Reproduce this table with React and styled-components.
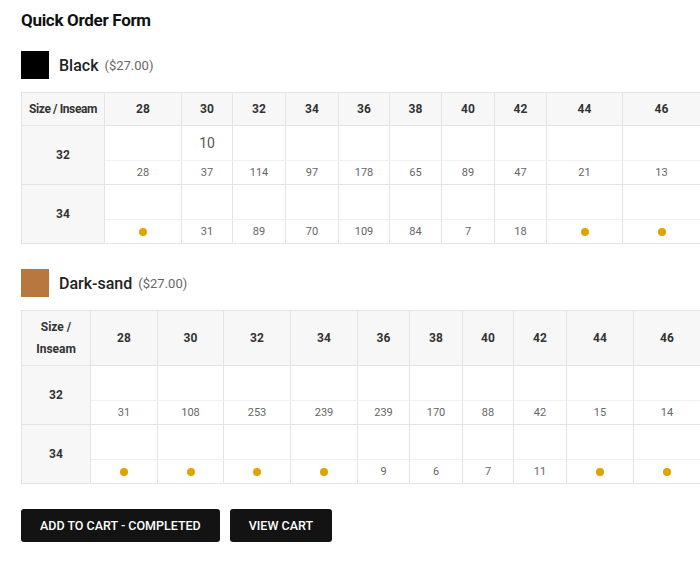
import React from 'react'
import styled, { createGlobalStyle } from 'styled-components'

const GlobalStyle = createGlobalStyle`
    html, body {
        margin: 0;
        padding: 0;
        background: #fff;
        overflow: hidden;
    }
    body {
        font-family: Roboto, "Liberation Sans", sans-serif;
        color: #222;
    }
`

const SIZES = ['28', '30', '32', '34', '36', '38', '40', '42', '44', '46']

const PRODUCTS = [
    {
        name: 'Black',
        price: '($27.00)',
        swatch: '#000',
        singleLine: true,
        widths: [83, 77, 51, 53, 53, 51, 52, 53, 52, 76, 78],
        rows: [
            { inseam: '32', values: { '30': '10' }, stock: [28, 37, 114, 97, 178, 65, 89, 47, 21, 13] },
            { inseam: '34', values: {}, stock: [null, 31, 89, 70, 109, 84, 7, 18, null, null] },
        ],
    },
    {
        name: 'Dark-sand',
        price: '($27.00)',
        swatch: '#b8773f',
        singleLine: false,
        widths: [69, 67, 66, 67, 67, 52, 53, 51, 53, 67, 67],
        rows: [
            { inseam: '32', values: {}, stock: [31, 108, 253, 239, 239, 170, 88, 42, 15, 14] },
            { inseam: '34', values: {}, stock: [null, null, null, null, 9, 6, 7, 11, null, null] },
        ],
    },
]

export default function App() {
    return (
        <Page>
            <GlobalStyle />
            <Title>Quick Order Form</Title>
            {
                PRODUCTS.map((product) => (
                    <Product key={product.name}>
                        <ProductHead>
                            <Swatch $color={product.swatch} />
                            <ProductName>{product.name}</ProductName>
                            <Price>{product.price}</Price>
                        </ProductHead>
                        <Grid>
                            <colgroup>
                                {product.widths.map((w, i) => <Col key={i} $w={w} />)}
                            </colgroup>
                            <thead>
                                <tr>
                                    <HeadCell $nowrap={product.singleLine}>Size / Inseam</HeadCell>
                                    {SIZES.map((s) => <HeadCell key={s}>{s}</HeadCell>)}
                                </tr>
                            </thead>
                            <tbody>
                                {
                                    product.rows.map((row) => (
                                        <React.Fragment key={row.inseam}>
                                            <tr>
                                                <RowLabel rowSpan={2}>{row.inseam}</RowLabel>
                                                {SIZES.map((s) => (
                                                    <InputCell key={s}>
                                                        <QtyInput defaultValue={row.values[s] || ''} />
                                                    </InputCell>
                                                ))}
                                            </tr>
                                            <tr>
                                                {row.stock.map((n, i) => (
                                                    <StockCell key={i}>
                                                        {n === null ? <Dot /> : n}
                                                    </StockCell>
                                                ))}
                                            </tr>
                                        </React.Fragment>
                                    ))
                                }
                            </tbody>
                        </Grid>
                    </Product>
                ))
            }
            <Actions>
                <Button>Add to cart - completed</Button>
                <Button>View cart</Button>
            </Actions>
        </Page>
    )
}

const Page = styled.div`
    padding: 8px 0 0 21px;
    width: 679px;
`
const Title = styled.h1`
    margin: 0 0 19px;
    font-size: 17px;
    line-height: 24px;
    font-weight: 700;
    color: #111;
    letter-spacing: -0.3px;
`
const Product = styled.section`
    margin-bottom: 25px;
`
const ProductHead = styled.div`
    display: flex;
    align-items: center;
    margin-bottom: 13px;
`
const Swatch = styled.span`
    width: 28px;
    height: 28px;
    background: ${(p) => p.$color};
    margin-right: 10px;
`
const ProductName = styled.span`
    font-size: 16px;
    font-weight: 500;
    color: #222;
    margin-right: 6px;
`
const Price = styled.span`
    font-size: 13px;
    color: #666;
`
const Grid = styled.table`
    width: 679px;
    table-layout: fixed;
    border-collapse: collapse;
    font-size: 12px;
`
const Col = styled.col`
    width: ${(p) => p.$w}px;
`
const HeadCell = styled.th`
    background: #f7f7f7;
    border: 1px solid #e4e4e4;
    padding: 5px 3px;
    height: 22px;
    line-height: 22px;
    font-weight: 700;
    color: #333;
    text-align: center;
    white-space: ${(p) => (p.$nowrap ? 'nowrap' : 'normal')};
    letter-spacing: ${(p) => (p.$nowrap ? '-0.4px' : '0')};
`
const RowLabel = styled.th`
    background: #f7f7f7;
    border: 1px solid #e4e4e4;
    font-weight: 700;
    color: #333;
    text-align: center;
`
const InputCell = styled.td`
    border: 1px solid #e4e4e4;
    border-bottom-color: #efefef;
    height: 34px;
    padding: 0;
`
const QtyInput = styled.input`
    display: block;
    width: 100%;
    height: 34px;
    box-sizing: border-box;
    border: none;
    background: transparent;
    text-align: center;
    font-family: Roboto, "Liberation Sans", sans-serif;
    font-size: 14px;
    color: #555;
    outline: none;
`
const StockCell = styled.td`
    border: 1px solid #e4e4e4;
    height: 23px;
    padding: 0;
    text-align: center;
    font-size: 11px;
    color: #666;
`
const Dot = styled.span`
    display: inline-block;
    width: 8px;
    height: 8px;
    border-radius: 50%;
    background: #dfa400;
    vertical-align: middle;
`
const Actions = styled.div`
    display: flex;
    gap: 10px;
    margin-top: 0;
`
const Button = styled.button`
    height: 33px;
    padding: 0 19px;
    background: #131313;
    color: #fff;
    border: none;
    border-radius: 3px;
    font-family: Roboto, "Liberation Sans", sans-serif;
    font-size: 12.5px;
    font-weight: 500;
    text-transform: uppercase;
    cursor: pointer;
`
